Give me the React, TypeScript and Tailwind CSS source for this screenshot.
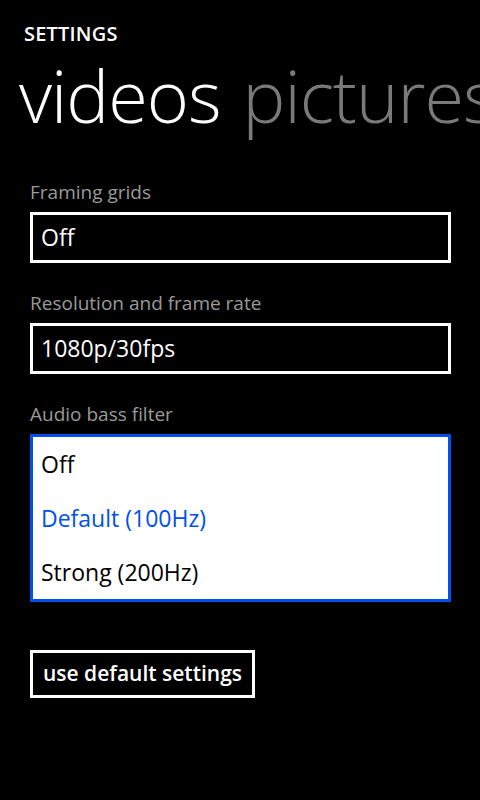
import React from "react";

const font = { fontFamily: '"Open Sans", "Noto Sans", sans-serif' };

function Field({ label, value }: { label: string; value: string }) {
  return (
    <div className="flex flex-col">
      <div className="text-[19px] leading-[24px] text-[#9a9a9a]">{label}</div>
      <div className="mt-[8px] h-[51px] w-[421px] border-[3px] border-white flex items-center px-[8px]">
        <span className="text-[23px] text-white leading-none">{value}</span>
      </div>
    </div>
  );
}

export default function App() {
  return (
    <div className="w-[480px] h-[800px] bg-black overflow-hidden text-white" style={font}>
      <div className="pl-[24px] pt-[22px] text-[20px] font-semibold leading-[24px] tracking-[0.2px]">SETTINGS</div>
      <div className="flex whitespace-nowrap pl-[19px] mt-[6px] h-[86px] items-center text-[72px] font-light leading-[86px] tracking-[-1px]">
        <span className="text-white">videos</span>
        <span className="ml-[22px] text-[#7a7a7a]">pictures</span>
      </div>
      <div className="pl-[30px] mt-[42px] flex flex-col gap-[28px]">
        <Field label="Framing grids" value="Off" />
        <Field label="Resolution and frame rate" value="1080p/30fps" />
        <div className="flex flex-col">
          <div className="text-[19px] leading-[24px] text-[#9a9a9a]">Audio bass filter</div>
          <div className="mt-[8px] h-[168px] w-[421px] border-[3px] border-[#0050ef] bg-white flex flex-col justify-center px-[8px]">
            <div className="h-[54px] flex items-center text-[23px] text-black">Off</div>
            <div className="h-[54px] flex items-center text-[23px] text-[#0050ef]">Default (100Hz)</div>
            <div className="h-[54px] flex items-center text-[23px] text-black">Strong (200Hz)</div>
          </div>
        </div>
      </div>
      <div className="pl-[30px] mt-[48px]">
        <div className="inline-flex h-[48px] items-center border-[3px] border-white px-[10px] text-[21px] font-semibold">
          use default settings
        </div>
      </div>
    </div>
  );
}
